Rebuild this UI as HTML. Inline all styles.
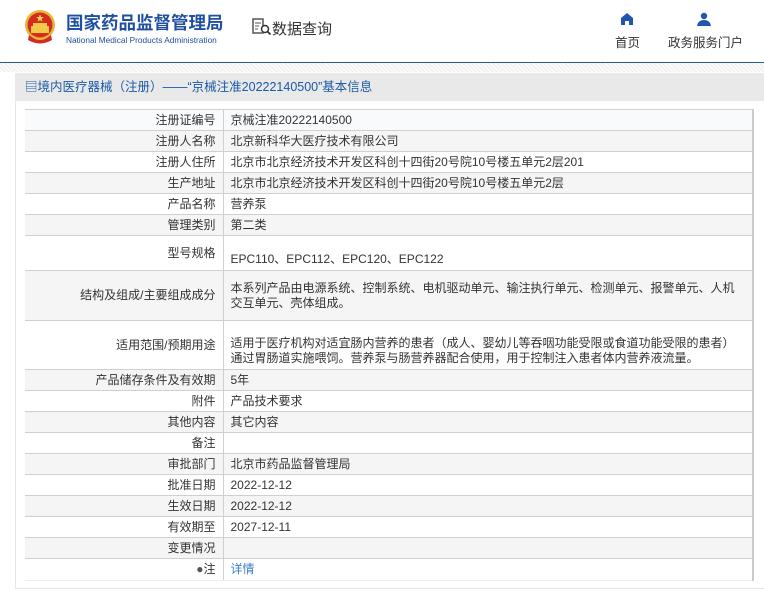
<!DOCTYPE html>
<html><head><meta charset="utf-8"><style>
*{margin:0;padding:0;box-sizing:border-box}
body{width:764px;height:593px;background:#fff;font-family:"Liberation Sans","Noto Sans CJK SC",sans-serif;font-size:12px;color:#333;position:relative;overflow:hidden}
.abs{position:absolute}
.band{left:0;top:63px;width:764px;height:9px;background:repeating-linear-gradient(45deg,#eee 0 1px,#fafafa 1px 3px)}
.panel{left:15px;top:73px;width:749px;height:516px;border:1px solid #e6e6e6;border-right:none;background:#fff}
.ttl{left:15px;top:73px;width:749px;height:28px;background:#e9e9e9;color:#1a5aa8;font-size:12.5px;line-height:29px;padding-left:10px}
table{position:absolute;left:25px;top:109px;width:729px;border-collapse:collapse;border-right:2px solid #ccc}
td{border-top:1px solid #d0d0d0;height:21px;padding:0 7px;line-height:15px}
td.l{width:198px;text-align:right;border-right:1px solid #d0d0d0}
tr:nth-child(even){background:#f5f5f5}
tr:first-child{background:#f8fafc}
tr:last-child td{border-bottom:1px solid #eee}
</style></head><body>
<svg class="abs" style="left:23px;top:9px" width="34" height="36" viewBox="0 0 34 36">
<circle cx="17" cy="16" r="15" fill="#e8b53a"/><circle cx="17" cy="16" r="12.5" fill="#d42d1f"/>
<rect x="8" y="17" width="18" height="7" fill="#f3c94a"/><rect x="10" y="14" width="14" height="3" fill="#f3c94a"/>
<polygon points="17,5 18,8 21,8 18.6,9.8 19.5,12.8 17,11 14.5,12.8 15.4,9.8 13,8 16,8" fill="#f6d34d"/>
<path d="M6 26 Q17 36 28 26 L29 31 Q17 38 5 31Z" fill="#d42d1f"/>
</svg>
<div class="abs" style="left:66px;top:10px;font-size:17.5px;font-weight:bold;color:#1f4fa0;white-space:nowrap">国家药品监督管理局</div>
<div class="abs" style="left:66px;top:35px;font-size:8.3px;color:#1f4fa0;white-space:nowrap">National Medical Products Administration</div>
<svg class="abs" style="left:252px;top:18px" width="20" height="18" viewBox="0 0 20 18"><rect x="1" y="1" width="10" height="14" fill="none" stroke="#555" stroke-width="1.5"/><path d="M3 5h6M3 8h4M3 11h3" stroke="#555"/><circle cx="13" cy="11" r="3.5" fill="#fff" stroke="#333" stroke-width="1.5"/><path d="M15.5 13.5l3 3" stroke="#333" stroke-width="1.8"/></svg>
<div class="abs" style="left:272px;top:18px;font-size:15px;color:#333">数据查询</div>
<svg class="abs" style="left:621px;top:13px" width="12" height="12" viewBox="0 0 12 12"><path d="M6 0L12 5V12H8V8H4V12H0V5Z" fill="#1e56b0"/></svg>
<div class="abs" style="left:615px;top:32px;font-size:12.5px">首页</div>
<svg class="abs" style="left:697px;top:12px" width="14" height="14" viewBox="0 0 14 14"><circle cx="7" cy="4" r="3.2" fill="#1e56b0"/><path d="M0 14Q1 8 7 8Q13 8 14 14Z" fill="#1e56b0"/></svg>
<div class="abs" style="left:668px;top:32px;font-size:12.5px">政务服务门户</div>
<div class="abs" style="left:0;top:62px;width:764px;height:1px;background:#2a5d95"></div>
<div class="abs band"></div>
<div class="abs panel"></div>
<div class="abs ttl">▤境内医疗器械（注册）——“京械注准20222140500”基本信息</div>
<table>
<tr><td class="l">注册证编号</td><td>京械注准20222140500</td></tr>
<tr><td class="l">注册人名称</td><td>北京新科华大医疗技术有限公司</td></tr>
<tr><td class="l">注册人住所</td><td>北京市北京经济技术开发区科创十四街20号院10号楼五单元2层201</td></tr>
<tr><td class="l">生产地址</td><td>北京市北京经济技术开发区科创十四街20号院10号楼五单元2层</td></tr>
<tr><td class="l">产品名称</td><td>营养泵</td></tr>
<tr><td class="l">管理类别</td><td>第二类</td></tr>
<tr><td class="l" style="height:35px;vertical-align:top;padding-top:10px">型号规格</td><td style="vertical-align:bottom;padding-bottom:3px">EPC110、EPC112、EPC120、EPC122</td></tr>
<tr><td class="l" style="height:50px">结构及组成/主要组成成分</td><td>本系列产品由电源系统、控制系统、电机驱动单元、输注执行单元、检测单元、报警单元、人机交互单元、壳体组成。</td></tr>
<tr><td class="l" style="height:49px">适用范围/预期用途</td><td style="vertical-align:bottom;padding-bottom:3px">适用于医疗机构对适宜肠内营养的患者（成人、婴幼儿等吞咽功能受限或食道功能受限的患者）通过胃肠道实施喂饲。营养泵与肠营养器配合使用，用于控制注入患者体内营养液流量。</td></tr>
<tr><td class="l">产品储存条件及有效期</td><td>5年</td></tr>
<tr><td class="l">附件</td><td>产品技术要求</td></tr>
<tr><td class="l">其他内容</td><td>其它内容</td></tr>
<tr><td class="l">备注</td><td></td></tr>
<tr><td class="l">审批部门</td><td>北京市药品监督管理局</td></tr>
<tr><td class="l">批准日期</td><td>2022-12-12</td></tr>
<tr><td class="l">生效日期</td><td>2022-12-12</td></tr>
<tr><td class="l">有效期至</td><td>2027-12-11</td></tr>
<tr><td class="l">变更情况</td><td></td></tr>
<tr><td class="l" style="height:22px"><span style="color:#555">●</span>注</td><td style="color:#3a7fd0">详情</td></tr>
</table>
</body></html>
